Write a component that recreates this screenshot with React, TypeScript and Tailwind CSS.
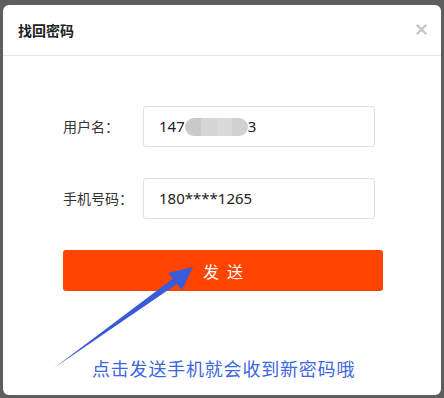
export default function App() {
  const font = { fontFamily: '"Noto Sans", "Noto Sans CJK SC", sans-serif' };
  const cjk = { fontFamily: '"Noto Sans CJK SC", sans-serif' };
  return (
    <div className="w-[444px] h-[398px] bg-[#5e5e5e] pt-[5px] px-[3px] pb-[3px]" style={font}>
      <div className="relative h-[390px] rounded-[6px] bg-white flex flex-col">
        <div className="h-[51px] shrink-0 flex items-center justify-between pl-[15px] pr-[14px] border-b border-[#e5e5e5]">
          <span className="text-[14px] font-bold text-[#222] leading-none" style={cjk}>找回密码</span>
          <svg width="11" height="11" viewBox="0 0 11 11" className="mt-[-2px]">
            <path d="M1.5 1.5 L9.5 9.5 M9.5 1.5 L1.5 9.5" stroke="#c4c4c4" strokeWidth="2.4" strokeLinecap="round" />
          </svg>
        </div>

        <div className="flex flex-col pl-[60px] pt-[50px]">
          <div className="flex items-center">
            <label className="w-[80px] text-[14px] text-[#333]" style={cjk}>用户名：</label>
            <div className="w-[232px] h-[41px] rounded-[3px] border border-[#e0e0e0] flex items-center pl-[15px] text-[15px] text-[#222]">
              <span>147</span>
              <span className="w-[63px] h-[18px] rounded-full bg-[linear-gradient(90deg,#c8c9cb_0%,#c8c9cb_25%,#d5d6d4_25%,#d5d6d4_50%,#dcd9d6_50%,#dcd9d6_75%,#d0d1d5_75%)]" />
              <span>3</span>
            </div>
          </div>

          <div className="flex items-center mt-[31px]">
            <label className="w-[80px] text-[14px] text-[#333]" style={cjk}>手机号码：</label>
            <div className="w-[232px] h-[41px] rounded-[3px] border border-[#e0e0e0] flex items-center pl-[15px] text-[15px] text-[#222]">
              180****1265
            </div>
          </div>

          <button className="mt-[31px] w-[320px] h-[41px] rounded-[3px] bg-[#ff4300] text-white text-[16px] flex items-center justify-center" style={cjk}>
            <span className="mr-[8px]">发</span>
            <span>送</span>
          </button>

          <p className="mt-[68px] ml-[29px] text-[18px] leading-none tracking-[0.8px] text-[#4067dc]" style={cjk}>
            点击发送手机就会收到新密码哦
          </p>
        </div>

        <svg className="absolute left-[-3px] top-[-5px] pointer-events-none" width="444" height="398" viewBox="0 0 444 398">
          <polygon points="54,368 173,278.5 168,273 193,267 182,290 177,284" fill="#3a5bd9" />
        </svg>
      </div>
    </div>
  );
}
